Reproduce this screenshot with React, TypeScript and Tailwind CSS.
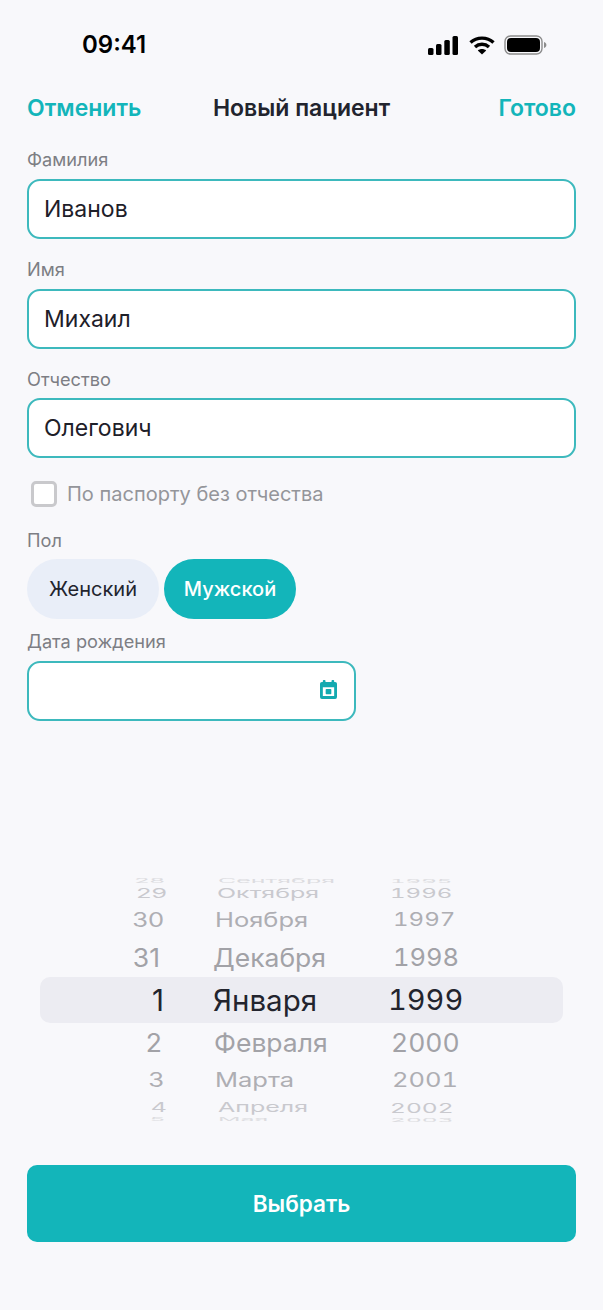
const wheel = [
  { h: "h-[10px]", text: "text-[25px] scale-y-[0.22] text-[#dcdce0]", day: "28", dayCl: "pr-[5px]", month: "Сентября", monthCl: "pl-[48px]", year: "1995", yearCl: "pl-[49px] text-[24px] scale-y-[0.22] text-[#dcdce0]" },
  { h: "h-[16px]", text: "text-[25px] scale-y-[0.55] text-[#c9c9ce]", day: "29", dayCl: "pr-[3px]", month: "Октября", monthCl: "pl-[47px]", year: "1996", yearCl: "pl-[49px] text-[24px] scale-y-[0.55] text-[#c9c9ce]" },
  { h: "h-[36px]", text: "text-[25.5px] scale-y-[0.78] text-[#aeaeb3]", day: "30", dayCl: "pr-[6px]", month: "Ноября", monthCl: "pl-[45px]", year: "1997", yearCl: "pl-[52px] text-[24px] scale-y-[0.78] text-[#aeaeb3]" },
  { h: "h-[39px]", text: "text-[26.5px] scale-y-[0.95] text-[#a2a2a7]", day: "31", dayCl: "pr-[10px]", month: "Декабря", monthCl: "pl-[43px]", year: "1998", yearCl: "pl-[52px] text-[25.5px] scale-y-[0.95] text-[#a2a2a7]" },
  { h: "h-[46px]", text: "text-[29.5px] text-[#22242e]", day: "1", dayCl: "pr-[6px]", month: "Января", monthCl: "pl-[43px]", year: "1999", yearCl: "pl-[47px] text-[29px] text-[#22242e]" },
  { h: "h-[40px]", text: "text-[26.5px] scale-y-[0.95] text-[#a2a2a7]", day: "2", dayCl: "pr-[8px]", month: "Февраля", monthCl: "pl-[44px]", year: "2000", yearCl: "pl-[50px] text-[26.5px] scale-y-[0.95] text-[#a2a2a7]" },
  { h: "h-[35px]", text: "text-[25.5px] scale-y-[0.78] text-[#aeaeb3]", day: "3", dayCl: "pr-[6px]", month: "Марта", monthCl: "pl-[45px]", year: "2001", yearCl: "pl-[51px] text-[25.5px] scale-y-[0.78] text-[#aeaeb3]" },
  { h: "h-[20px]", text: "text-[25px] scale-y-[0.55] text-[#c9c9ce]", day: "4", dayCl: "pr-[3px]", month: "Апреля", monthCl: "pl-[48px]", year: "2002", yearCl: "pl-[49px] text-[24.5px] scale-y-[0.55] text-[#c9c9ce]" },
  { h: "h-[4px]", text: "text-[25px] scale-y-[0.2] text-[#dcdce0]", day: "5", dayCl: "pr-[5px]", month: "Мая", monthCl: "pl-[48px]", year: "2003", yearCl: "pl-[49px] text-[24.5px] scale-y-[0.2] text-[#dcdce0]" },
];

function StatusIcons() {
  return (
    <div className="flex items-center">
      <svg width="30" height="19" viewBox="0 0 30 19" fill="black" className="mr-[11px]">
        <rect x="0" y="12" width="5.5" height="7" rx="1.5" />
        <rect x="8" y="8" width="5.5" height="11" rx="1.5" />
        <rect x="16.3" y="4" width="5.5" height="15" rx="1.5" />
        <rect x="24.5" y="0" width="5.5" height="19" rx="1.5" />
      </svg>
      <svg width="26" height="19" viewBox="0 0 26 19" fill="none" stroke="black" strokeWidth="3.4" className="mr-[9px]">
        <path d="M1.5 6.5C7.8 0.6 18.2 0.6 24.5 6.5" />
        <path d="M6 11C10 7.4 16 7.4 20 11" />
        <path d="M13 18.5L8.8 14.4C11 12.4 15 12.4 17.2 14.4Z" fill="black" stroke="none" />
      </svg>
      <svg width="43" height="20" viewBox="0 0 43 20">
        <rect x="1" y="1" width="37" height="18" rx="5.5" fill="none" stroke="#8c8c8c" strokeWidth="1.4" />
        <rect x="3" y="3" width="33" height="14" rx="4" fill="black" />
        <path d="M40 7c1.6.5 2.4 1.6 2.4 3s-.8 2.5-2.4 3z" fill="#8c8c8c" />
      </svg>
    </div>
  );
}

function Field({ label, value, gap = "mb-[7px]" }: { label: string; value: string; gap?: string }) {
  return (
    <div>
      <div className={`h-[24px] text-[18.2px] leading-[23px] text-[#7d7e84] ${gap}`}>{label}</div>
      <div className="flex h-[60px] items-center rounded-[13px] border-2 border-[#3db9bd] bg-white pl-[15px] text-[23px] text-[#1e2029]">
        {value}
      </div>
    </div>
  );
}

export default function App() {
  return (
    <div className="flex h-[1310px] w-[603px] flex-col overflow-hidden bg-[#f8f8fb] font-['Inter',sans-serif]">
      <div className="flex h-[90px] shrink-0 items-center justify-between pl-[82px] pr-[56px]">
        <span className="text-[24px] font-semibold text-black">09:41</span>
        <StatusIcons />
      </div>

      <div className="flex h-[36px] shrink-0 items-center px-[27px] text-[23px] font-semibold">
        <span className="flex-1 text-[#13b5ba]">Отменить</span>
        <span className="text-[#22242e]">Новый пациент</span>
        <span className="flex-1 text-right text-[#13b5ba]">Готово</span>
      </div>

      <div className="mt-[22px] flex flex-col gap-[19px] px-[27px]">
        <Field label="Фамилия" value="Иванов" />
        <Field label="Имя" value="Михаил" />
        <Field label="Отчество" value="Олегович" gap="mb-[6px]" />
      </div>

      <div className="mt-[23px] flex h-[26px] items-center gap-[10px] pl-[31px]">
        <div className="h-[26px] w-[26px] rounded-[5px] border-[3px] border-[#c9c9cc] bg-white" />
        <span className="text-[20px] text-[#94959a]">По паспорту без отчества</span>
      </div>

      <div className="mt-[22px] px-[27px]">
        <div className="mb-[6px] h-[24px] text-[18.2px] leading-[23px] text-[#7d7e84]">Пол</div>
        <div className="flex gap-[5px]">
          <div className="flex h-[60px] w-[132px] items-center justify-center rounded-[30px] bg-[#e9eef8] text-[20px] font-normal text-[#22242e]">
            Женский
          </div>
          <div className="flex h-[60px] w-[132px] items-center justify-center rounded-[30px] bg-[#13b5ba] text-[20px] font-medium text-white">
            Мужской
          </div>
        </div>
      </div>

      <div className="mt-[11px] px-[27px]">
        <div className="mb-[7px] h-[24px] text-[18.2px] leading-[23px] text-[#7d7e84]">Дата рождения</div>
        <div className="flex h-[60px] w-[329px] items-center justify-end rounded-[13px] border-2 border-[#3db9bd] bg-white pr-[17px]">
          <svg width="17" height="19" viewBox="0 0 18 20" fill="#13aab0" className="mb-[3px]">
            <rect x="3" y="0" width="2.8" height="4" rx="1" />
            <rect x="12.2" y="0" width="2.8" height="4" rx="1" />
            <path fillRule="evenodd" d="M2 2h14a2 2 0 0 1 2 2v14a2 2 0 0 1-2 2H2a2 2 0 0 1-2-2V4a2 2 0 0 1 2-2zm1 5.5V17h12V7.500H3z" />
            <rect x="6" y="9.500" width="6" height="5.500" rx="0.8" />
          </svg>
        </div>
      </div>

      <div className="mx-[40px] mt-[155px] h-[246px] shrink-0">
        {wheel.map((row) => (
          <div
            key={row.year}
            className={`flex items-center whitespace-nowrap ${row.h} ${row.day === "1" ? "rounded-[10px] bg-[#ececf2]" : ""}`}
          >
            <div className={`w-[130px] text-right ${row.text} ${row.dayCl}`}>{row.day}</div>
            <div className={`w-[171px] ${row.text} ${row.monthCl}`}>{row.month}</div>
            <div className={`tabular-nums ${row.yearCl}`}>{row.year}</div>
          </div>
        ))}
      </div>

      <div className="mx-[27px] mt-[43px] flex h-[77px] shrink-0 items-center justify-center rounded-[10px] bg-[#13b5ba] text-[22.5px] font-semibold text-white">
        Выбрать
      </div>
    </div>
  );
}
